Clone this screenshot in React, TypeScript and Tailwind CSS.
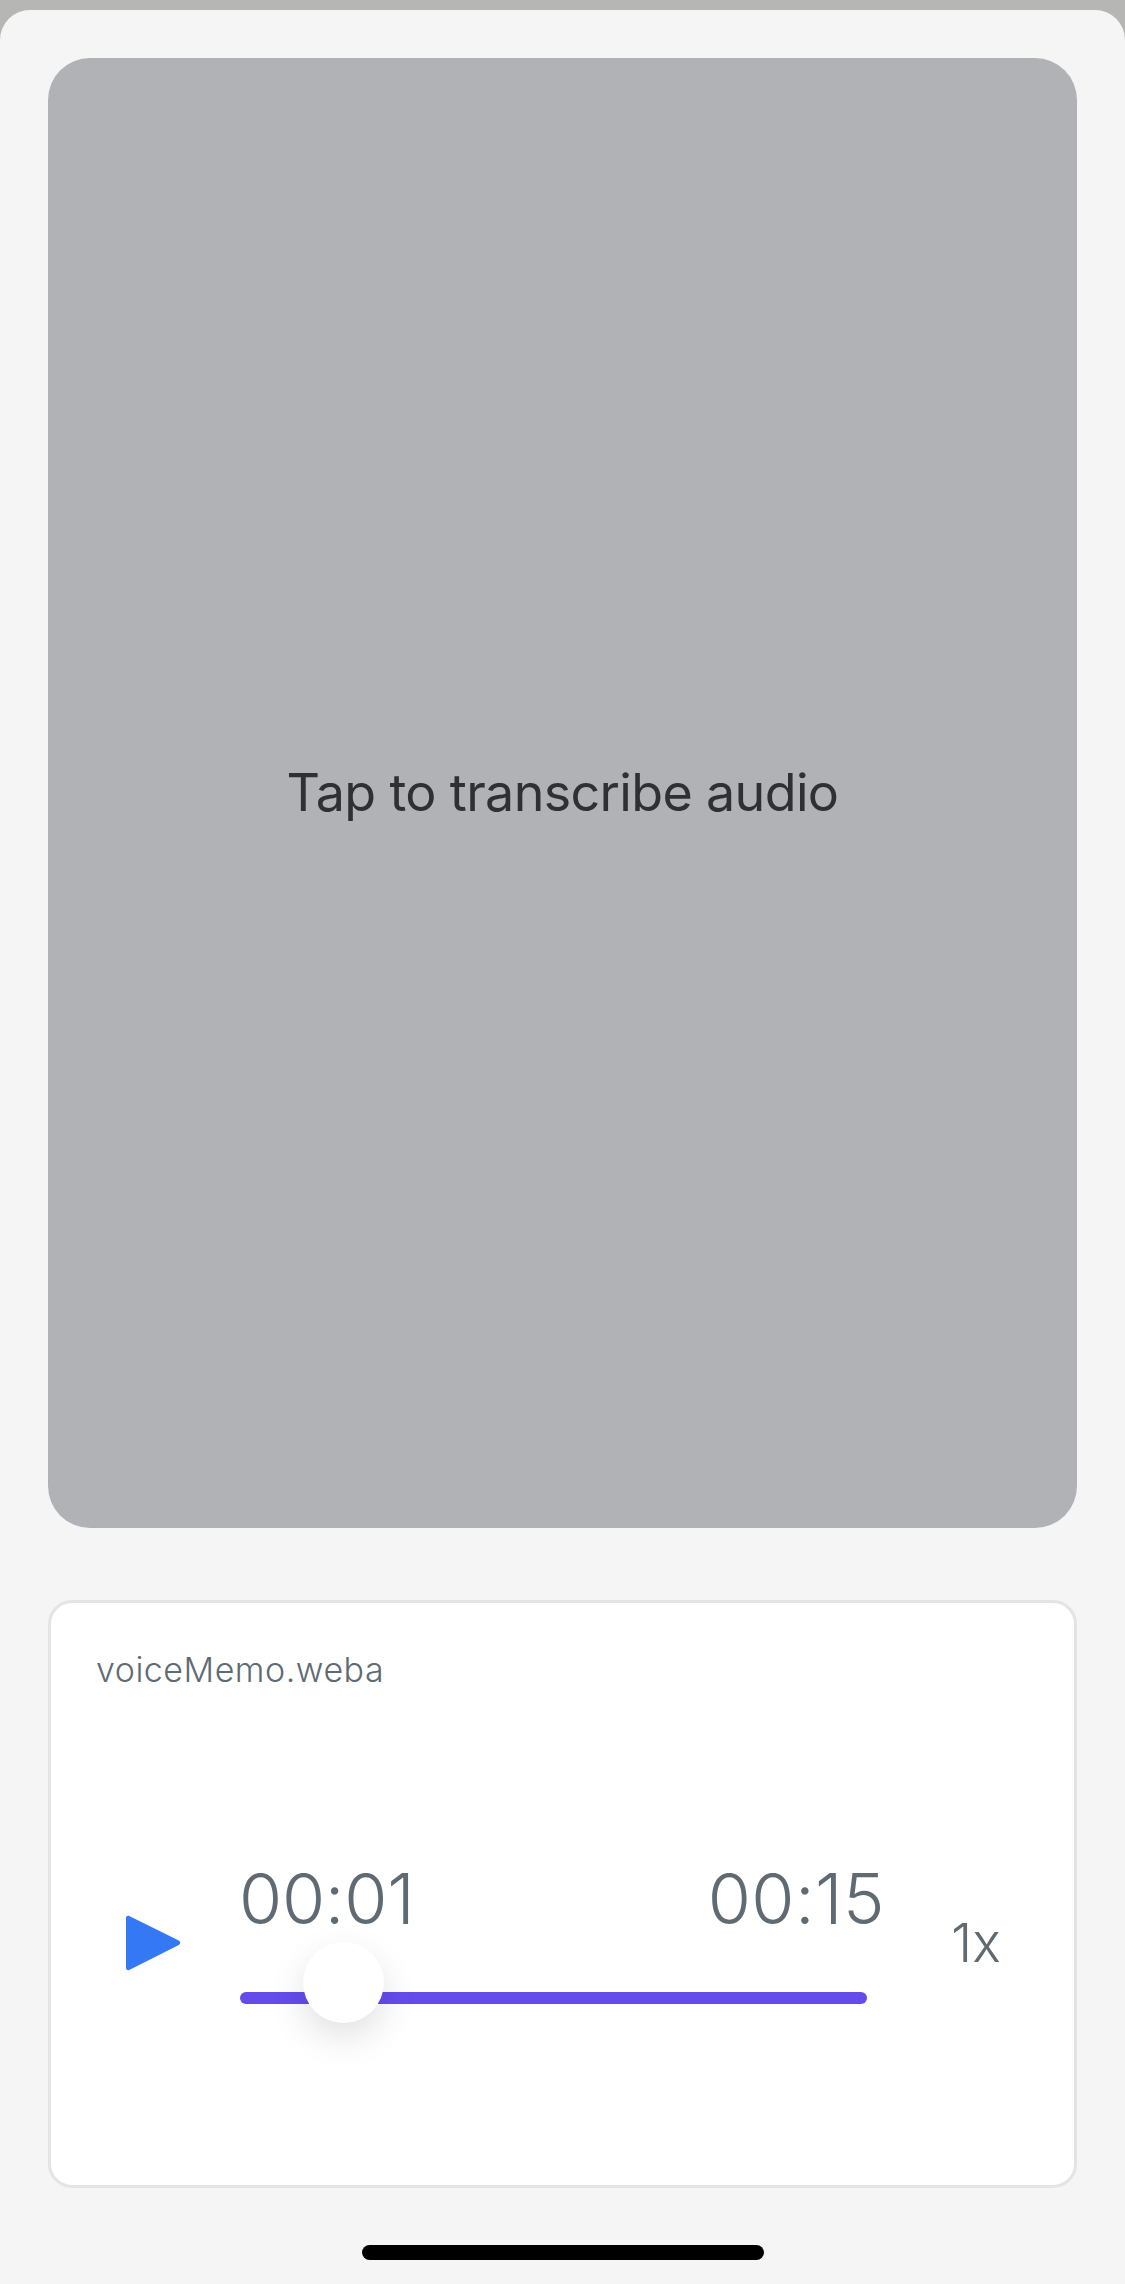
function PlayIcon() {
  return (
    <svg className="w-[56px] h-[56px] shrink-0" viewBox="0 0 56 56" fill="#3478f6">
      <path d="M1 3.2C1 1.3 2.6.4 4.2 1.1L53.8 25.6c1.9.9 1.9 3.4 0 4.3L4.2 54.9C2.6 55.6 1 54.7 1 52.8Z" />
    </svg>
  );
}

function AudioPlayer() {
  return (
    <div className="mt-[72px] h-[588px] bg-white border-[3px] border-[#e4e4e4] rounded-[24px] pl-[45px] pr-[45px] pt-[45px]">
      <p className="text-[34px] leading-[44px] font-light tracking-[0.5px] text-[#5f6a72]">voiceMemo.weba</p>

      <div className="flex items-start mt-[164px]">
        <div className="pl-[29px] pt-[59px]">
          <PlayIcon />
        </div>

        <div className="ml-[59px] w-[645px]">
          <div className="flex justify-between -ml-[1px]">
            <span className="text-[70px] leading-[86px] font-light tracking-[-0.3px] text-[#5f6a72]">00:01</span>
            <span className="text-[70px] leading-[86px] font-light tracking-[0.4px] text-[#5f6a72]">00:15</span>
          </div>
          <div className="relative mt-[50px] w-[627px] h-[12px] rounded-full bg-[#644cec]">
            <div className="absolute left-[63px] top-[-50px] w-[81px] h-[81px] rounded-full bg-white shadow-[0_14px_36px_rgba(0,0,0,0.12)]" />
          </div>
        </div>

        <span className="ml-[66px] pt-[57px] text-[54px] leading-[60px] font-light text-[#5f6a72]">1x</span>
      </div>
    </div>
  );
}

export default function App() {
  return (
    <div className="h-[2284px] overflow-hidden bg-[#b6b7b4] pt-[10px] font-['Inter',sans-serif]">
      <div className="h-[2274px] bg-[#f5f5f5] rounded-t-[30px] px-[48px] pt-[48px]">
        <button className="w-full h-[1470px] flex items-center justify-center rounded-[42px] bg-[#b1b2b5]">
          <span className="text-[52px] leading-[64px] tracking-[-0.65px] text-[#2f3034]">Tap to transcribe audio</span>
        </button>

        <AudioPlayer />

        <div className="mx-auto mt-[57px] w-[402px] h-[15px] rounded-full bg-black" />
      </div>
    </div>
  );
}
